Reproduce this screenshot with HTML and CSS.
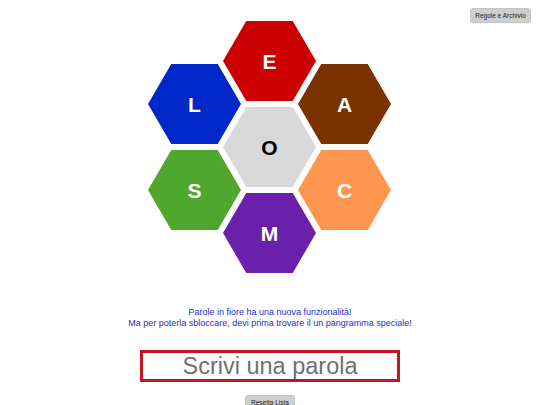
FILE: index.html
```html
<!DOCTYPE html>
<html lang="it">
<head>
<meta charset="utf-8">
<title>Parole in fiore</title>
<link rel="stylesheet" href="styles.css">
</head>
<body>
<div class="page">
  <header class="topbar">
    <button class="btn btn-rules">Regole e Archivio</button>
  </header>
  <svg class="flower" width="244" height="253" viewBox="0 0 244 253" xmlns="http://www.w3.org/2000/svg">
    <g class="hex">
      <polygon points="75,40 98.25,0 144.75,0 168,40 144.75,80 98.25,80" fill="#cc0000"/>
      <text x="121.5" y="47.5" fill="#ffffff">E</text>
    </g>
    <g class="hex">
      <polygon points="0,83 23.25,43 69.75,43 93,83 69.75,123 23.25,123" fill="#0028c8"/>
      <text x="46.5" y="90.5" fill="#ffffff">L</text>
    </g>
    <g class="hex">
      <polygon points="150,83 173.25,43 219.75,43 243,83 219.75,123 173.25,123" fill="#7a3300"/>
      <text x="196.5" y="90.5" fill="#ffffff">A</text>
    </g>
    <g class="hex">
      <polygon points="75,126 98.25,86 144.75,86 168,126 144.75,166 98.25,166" fill="#d9d9d9"/>
      <text x="121.5" y="133.5" fill="#000000">O</text>
    </g>
    <g class="hex">
      <polygon points="0,169 23.25,129 69.75,129 93,169 69.75,209 23.25,209" fill="#4fa72d"/>
      <text x="46.5" y="176.5" fill="#ffffff">S</text>
    </g>
    <g class="hex">
      <polygon points="150,169 173.25,129 219.75,129 243,169 219.75,209 173.25,209" fill="#ff9650"/>
      <text x="196.5" y="176.5" fill="#ffffff">C</text>
    </g>
    <g class="hex">
      <polygon points="75,212 98.25,172 144.75,172 168,212 144.75,252 98.25,252" fill="#6a20aa"/>
      <text x="121.5" y="219.5" fill="#ffffff">M</text>
    </g>
  </svg>
  <p class="notice">Parole in fiore ha una nuova funzionalità!<br>Ma per poterla sbloccare, devi prima trovare il un pangramma speciale!</p>
  <div class="entry">
    <input class="word-input" type="text" placeholder="Scrivi una parola">
  </div>
  <div class="actions">
    <button class="btn btn-reset">Resetta Lista</button>
  </div>
</div>
</body>
</html>
```

FILE: styles.css
```css
html, body {
  margin: 0;
  padding: 0;
  background: #ffffff;
}
body {
  font-family: "Liberation Sans", Arial, sans-serif;
  width: 540px;
  height: 405px;
  overflow: hidden;
}
.page {
  display: flex;
  flex-direction: column;
  align-items: center;
  width: 540px;
}
.topbar {
  width: 100%;
  height: 21px;
  display: flex;
  justify-content: flex-end;
  align-items: flex-start;
  box-sizing: border-box;
  padding: 8px 9px 0 0;
}
.btn {
  font-family: "Liberation Sans", Arial, sans-serif;
  background: #cfcfcf;
  border: 1px solid #c4c4c4;
  border-radius: 3px;
  color: #222;
  padding: 0;
  margin: 0;
  flex: none;
}
.btn-rules {
  width: 61px;
  height: 15px;
  font-size: 6.5px;
}
.flower {
  display: block;
  flex: none;
}
.hex text {
  font-family: "Liberation Sans", Arial, sans-serif;
  font-weight: bold;
  font-size: 21px;
  text-anchor: middle;
}
.notice {
  margin: 33px 0 0 0;
  font-size: 9px;
  line-height: 11px;
  color: #1a2fcc;
  text-align: center;
}
.entry {
  margin-top: 21px;
}
.word-input {
  display: block;
  box-sizing: border-box;
  width: 260px;
  height: 32px;
  border: 3px solid #c8141e;
  padding: 0;
  margin: 0;
  font-family: "Liberation Sans", Arial, sans-serif;
  font-size: 23.5px;
  text-align: center;
  color: #333;
  outline: none;
}
.word-input::placeholder {
  color: #707070;
}
.actions {
  margin-top: 9px;
}
.btn-reset {
  width: 50px;
  height: 15px;
  font-size: 6.5px;
}
```
